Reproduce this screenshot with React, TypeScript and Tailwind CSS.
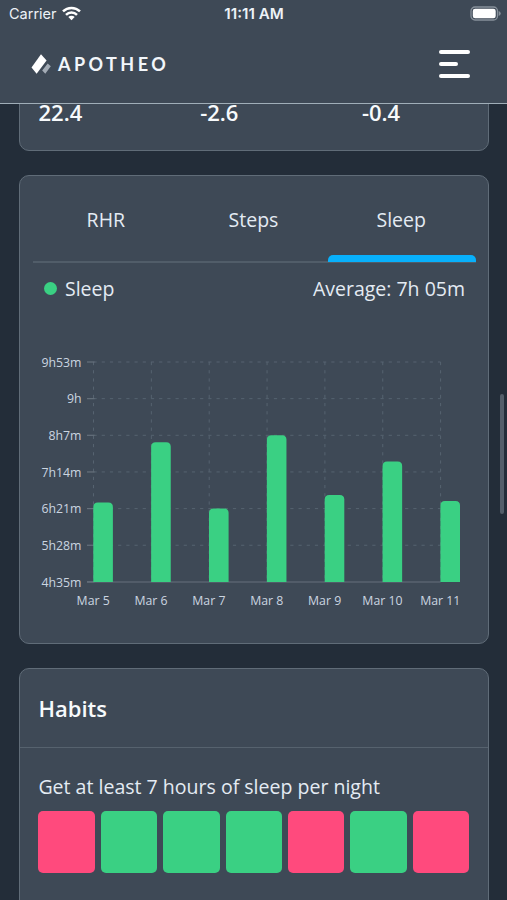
const stats = ['22.4', '-2.6', '-0.4'];
const tabs = ['RHR', 'Steps', 'Sleep'];
const yLabels = ['9h53m', '9h', '8h7m', '7h14m', '6h21m', '5h28m', '4h35m'];
const bars = [
  { label: 'Mar 5', top: 502.5 },
  { label: 'Mar 6', top: 442.3 },
  { label: 'Mar 7', top: 508.6 },
  { label: 'Mar 8', top: 435.2 },
  { label: 'Mar 9', top: 495 },
  { label: 'Mar 10', top: 461.5 },
  { label: 'Mar 11', top: 501 },
];
const habitDays = [false, true, true, true, false, true, false];

const lineX = (i: number) => 93.5 + i * 57.85;
const lineY = (i: number) => 362 + i * 36.65;
const baseline = 582;

function SleepChart() {
  return (
    <svg className="block h-[280px] w-[443px]" viewBox="33 340 443 280">
      <g stroke="#566370" strokeWidth="1" strokeDasharray="3.2 5">
        {yLabels.slice(0, 6).map((l, i) => (
          <line key={l} x1={lineX(0)} x2={lineX(6)} y1={lineY(i)} y2={lineY(i)} />
        ))}
        {bars.map((b, i) => (
          <line key={b.label} x1={lineX(i)} x2={lineX(i)} y1="362" y2={baseline} />
        ))}
      </g>
      <g stroke="#66717c" strokeWidth="1.2">
        {yLabels.map((l, i) => (
          <line key={l} x1="87" x2={lineX(0) + 1} y1={lineY(i)} y2={lineY(i)} />
        ))}
        <line x1="87" x2={lineX(6)} y1={baseline} y2={baseline} />
      </g>
      <g fill="#3ad083">
        {bars.map((b, i) => {
          const x = lineX(i) - 0.2;
          return (
            <path
              key={b.label}
              d={`M${x} ${baseline}V${b.top + 4.5}q0 -4.5 4.5 -4.5h10.6q4.5 0 4.5 4.5V${baseline}z`}
            />
          );
        })}
      </g>
      <g className="font-['Open_Sans',sans-serif] text-[12.3px]" fill="#cbd5e0">
        {yLabels.map((l, i) => (
          <text key={l} x="81.5" y={lineY(i) + 4.6} textAnchor="end">{l}</text>
        ))}
        {bars.map((b, i) => (
          <text key={b.label} x={lineX(i) - 0.3} y="605" textAnchor="middle">{b.label}</text>
        ))}
      </g>
    </svg>
  );
}

function StatusBar() {
  return (
    <div className="grid h-7 grid-cols-3 items-center pr-1.5 pl-[9px] font-[Inter,sans-serif] text-[14.5px] leading-none text-[#edf2f7]">
      <div className="flex items-center gap-[5px]">
        <span>Carrier</span>
        <svg className="mb-0.5 h-[15px] w-[19px]" viewBox="0 0 19 15" fill="none" stroke="#fff" strokeWidth="2.5">
          <path d="M1 5.4a12.2 12.2 0 0 1 17 0" />
          <path d="M4 8.8a7.8 7.8 0 0 1 11 0" />
          <path d="M6.3 11a4.5 4.5 0 0 1 6.4 0L9.5 14.2z" fill="#fff" stroke="none" />
        </svg>
      </div>
      <span className="-ml-0.5 text-center text-[15.2px] font-semibold">11:11 AM</span>
      <svg className="mb-0.5 h-[15px] w-[31px] justify-self-end" viewBox="0 0 31 15">
        <rect x="1" y="1" width="26.5" height="13" rx="4" fill="none" stroke="#87909a" strokeWidth="1.3" />
        <rect x="2.8" y="2.8" width="22.9" height="9.4" rx="2.3" fill="#fff" />
        <path d="M28.7 5v5q2-.8 2-2.5t-2-2.5z" fill="#87909a" />
      </svg>
    </div>
  );
}

function Header() {
  return (
    <header className="relative z-10 h-[104px] shrink-0 border-b border-[#a0aeb8] bg-[#3e4956]">
      <StatusBar />
      <div className="flex h-[72px] items-center justify-between pr-[37px] pl-[31px]">
        <div className="flex items-center gap-[7px]">
          <svg className="h-[22px] w-5" viewBox="0 0 20 22">
            <path d="M10 1.3 15.6 7.4 5.6 20.7.5 14.5z" fill="#fff" />
            <path d="M16.7 10.4 19.8 13.3 14.3 20.8 11.2 17.5z" fill="#a3abb5" />
          </svg>
          <span className="font-[Lato,sans-serif] text-[18px] leading-none font-bold tracking-[3.45px] text-[#f2f6fa]">
            APOTHEO
          </span>
        </div>
        <div className="flex w-[31px] flex-col gap-2">
          <span className="h-1 w-full rounded-sm bg-white" />
          <span className="h-1 w-[19px] rounded-sm bg-white" />
          <span className="h-1 w-full rounded-sm bg-white" />
        </div>
      </div>
    </header>
  );
}

export default function App() {
  return (
    <div className="flex h-[900px] w-[507px] flex-col overflow-hidden bg-[#232d39] font-['Open_Sans',sans-serif] text-[#e4ebf3]">
      <Header />
      <main className="relative flex flex-1 flex-col gap-6 pr-[18px] pl-[19px]">
        <section className="-mt-[11px] flex h-[58px] shrink-0 rounded-b-[10px] border border-[#606c78] bg-[#3e4956] pl-[18.5px]">
          {stats.map((s) => (
            <span key={s} className="w-[161.7px] shrink-0 pt-px text-[22px] leading-[34px] font-semibold text-[#f7fafc] last:w-auto">{s}</span>
          ))}
        </section>

        <section className="h-[469px] shrink-0 rounded-[10px] border border-[#606c78] bg-[#3e4956] pr-3 pl-[13px]">
          <div className="grid h-[87px] grid-cols-3 border-b-2 border-[#515d69]">
            {tabs.map((t, i) => (
              <div key={t} className="relative pt-[30px] text-center text-[19.5px] leading-[27px]">
                <span className="-ml-0.5">{t}</span>
                {i === 2 && <span className="absolute inset-x-0 -bottom-px h-[7px] rounded-t-[5px] bg-[#08b0fb]" />}
              </div>
            ))}
          </div>
          <div className="flex h-[51px] items-center justify-between pr-[11px] pl-[11px] text-[19.5px]">
            <div className="flex items-center gap-2">
              <span className="size-[13px] rounded-full bg-[#3ad083]" />
              <span>Sleep</span>
            </div>
            <span>Average: 7h 05m</span>
          </div>
          <div className="pt-[26px]">
            <SleepChart />
          </div>
        </section>

        <section className="h-[260px] shrink-0 rounded-[10px] border border-[#606c78] bg-[#3e4956]">
          <h2 className="flex h-[79px] items-center border-b border-[#56626e] pl-[18.5px] text-[22px] font-semibold text-[#f7fafc]">Habits</h2>
          <div className="pt-[25px] pr-[19px] pl-[18.4px]">
            <p className="text-[19.55px] leading-7">Get at least 7 hours of sleep per night</p>
            <div className="mt-2.5 grid grid-cols-7 gap-1.5">
              {habitDays.map((done, i) => (
                <span key={i} className={done ? 'h-[62px] rounded-[5px] bg-[#3ad083]' : 'h-[62px] rounded-[5px] bg-[#ff4a7d]'} />
              ))}
            </div>
          </div>
        </section>
        <span className="absolute top-[290px] right-[3px] h-[120px] w-1 rounded-full bg-[#535e6a]" />
      </main>
    </div>
  );
}
